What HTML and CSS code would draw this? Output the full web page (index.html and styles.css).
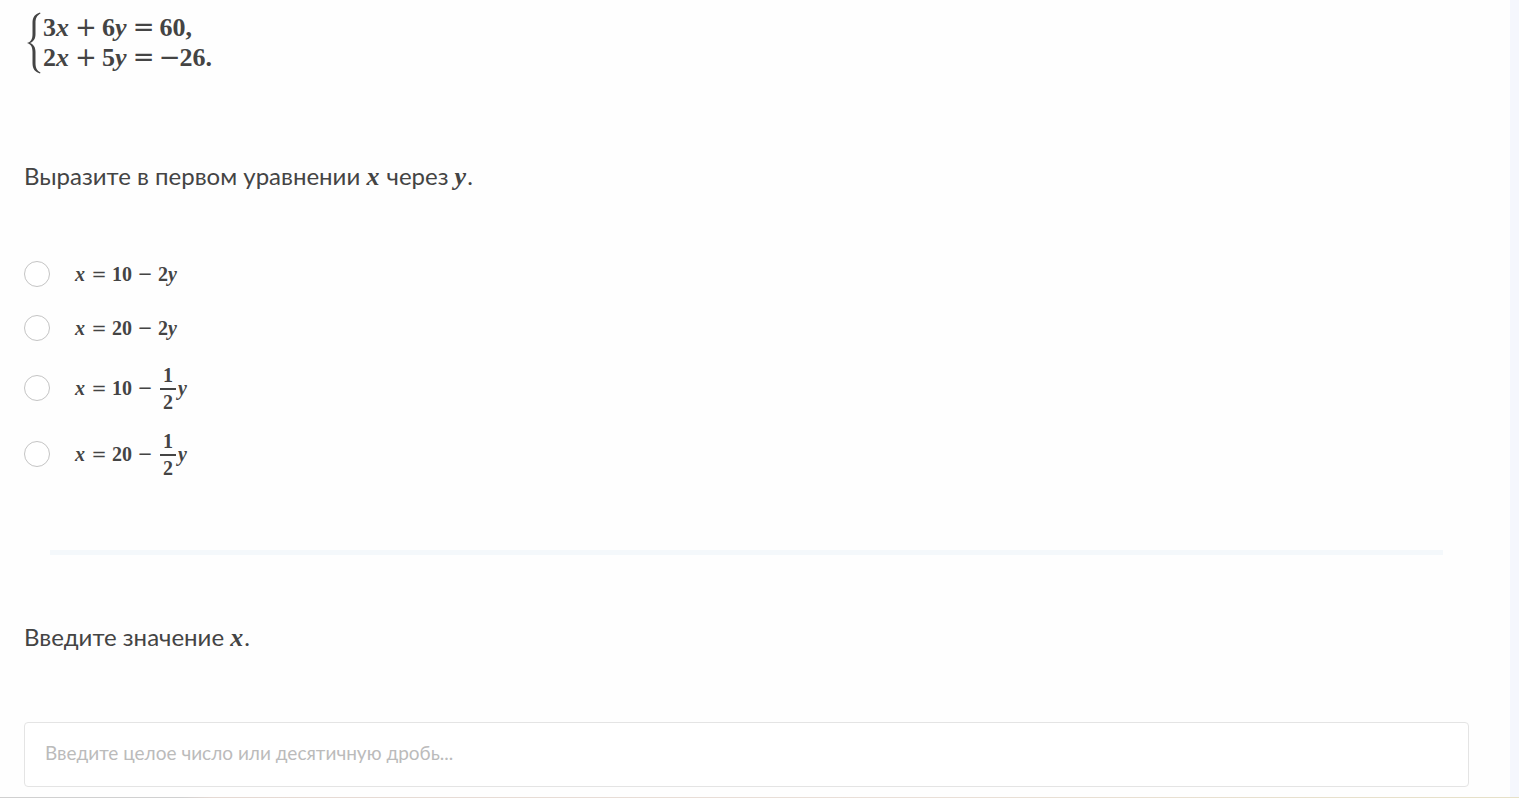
FILE: index.html
```
<!DOCTYPE html>
<html lang="ru">
<head>
	<meta charset="UTF-8">
	<title>Система уравнений</title>
	<link rel="stylesheet" href="styles.css">
</head>
<body>
	<form id="task">
		<div class="system math">
			<svg class="brace" width="14" height="62" viewBox="0 0 14 62" aria-hidden="true">
				<path d="M13 0.5C8 2 5.5 5 5.5 11V22C5.5 27 4 30 0 31C4 32 5.5 35 5.5 40V51C5.5 57 8 60 13 61.5L13.5 60.5C10 58.5 8.5 56 8.5 51V40C8.5 35 6.5 32.5 3 31C6.5 29.5 8.5 27 8.5 22V11C8.5 6 10 3.5 13.5 1.5Z"/>
			</svg>
			<div class="equations">
				<div>3<i>x</i><span class="op">+</span>6<i>y</i><span class="op">=</span>60,</div>
				<div>2<i>x</i><span class="op">+</span>5<i>y</i><span class="op">=</span><span class="op sign">−</span>26.</div>
			</div>
		</div>

		<p class="question">Выразите в первом уравнении <i class="math">x</i> через <i class="math">y</i>.</p>

		<div class="options">
			<label class="option">
				<input type="radio" name="answer" value="1">
				<span class="math"><i>x</i><span class="op">=</span>10<span class="op">−</span>2<i>y</i></span>
			</label>
			<label class="option">
				<input type="radio" name="answer" value="2">
				<span class="math"><i>x</i><span class="op">=</span>20<span class="op">−</span>2<i>y</i></span>
			</label>
			<label class="option tall">
				<input type="radio" name="answer" value="3">
				<span class="math"><i>x</i><span class="op">=</span>10<span class="op">−</span><span class="frac"><span>1</span><span>2</span></span><i>y</i></span>
			</label>
			<label class="option tall">
				<input type="radio" name="answer" value="4">
				<span class="math"><i>x</i><span class="op">=</span>20<span class="op">−</span><span class="frac"><span>1</span><span>2</span></span><i>y</i></span>
			</label>
		</div>

		<hr>

		<label class="question" for="valueInput">Введите значение <i class="math">x</i>.</label>
		<input id="valueInput" type="text" placeholder="Введите целое число или десятичную дробь...">
	</form>
	<div class="bottom-line"></div>
</body>
</html>
```
FILE: styles.css
```
* {
	box-sizing: border-box;
}
body {
	margin: 0;
	background-color: #f5f7fd;
	color: #444;
	font-family: Lato, "Noto Sans", sans-serif;
	font-size: 24px;
}
#task {
	margin-right: 9px;
	padding: 12px 41px 10px 24px;
	background-color: #fefefe;
}
.math {
	font-family: "Liberation Serif", serif;
	font-weight: bold;
	white-space: nowrap;
}
.math i {
	padding-right: 1px;
}
.op {
	display: inline-block;
	width: 22px;
	margin: 0 5px;
	font-family: "DejaVu Sans", sans-serif;
	font-weight: normal;
	line-height: 1;
	text-align: center;
}

/* System of equations */
.system {
	display: flex;
	align-items: center;
	gap: 2px;
	padding-left: 3px;
	font-size: 26px;
	line-height: 30px;
}
.brace path {
	fill: #444;
}
.system .sign {
	margin: 0 -1px;
}

.question {
	display: block;
	margin: 86px 0 55px;
	line-height: 32px;
}
.question .math {
	padding-right: 1px;
	font-size: 26px;
	line-height: 1;
}

/* Answers */
.option {
	display: flex;
	align-items: center;
	gap: 25px;
	height: 54px;
	font-size: 20px;
}
.option.tall {
	height: 66px;
}
.option input {
	appearance: none;
	width: 26px;
	height: 26px;
	margin: 0;
	border: 1px solid #c4c4c4;
	border-radius: 50%;
	background-color: #fff;
}
.option input:checked {
	border: 8px solid #5a8dee;
}
.option .math {
	display: flex;
	align-items: center;
}
.option .op {
	width: 16px;
	font-size: 18px;
}
.frac {
	display: inline-flex;
	flex-direction: column;
	width: 16px;
	margin: 0 2px;
	padding-top: 2px;
	line-height: 25px;
	text-align: center;
}
.frac span:first-child {
	border-bottom: 2px solid #444;
}

hr {
	height: 5px;
	margin: 63px 26px 0;
	border: 0;
	background-color: #f4f8fb;
}
hr + .question {
	margin: 66px 0 69px;
}
#valueInput {
	display: block;
	width: 100%;
	height: 65px;
	padding: 0 20px 4px;
	border: 1px solid #e4e4e4;
	border-radius: 4px;
	background-color: #fff;
	color: #444;
	font-family: inherit;
	font-size: 19px;
}
#valueInput::placeholder {
	color: #bbb;
}
.bottom-line {
	height: 1px;
	background: linear-gradient(to right, #d0d0d0 12%, #e5d9d3 14%, #e9dfd8 60%, #e6e0c8);
}
```
